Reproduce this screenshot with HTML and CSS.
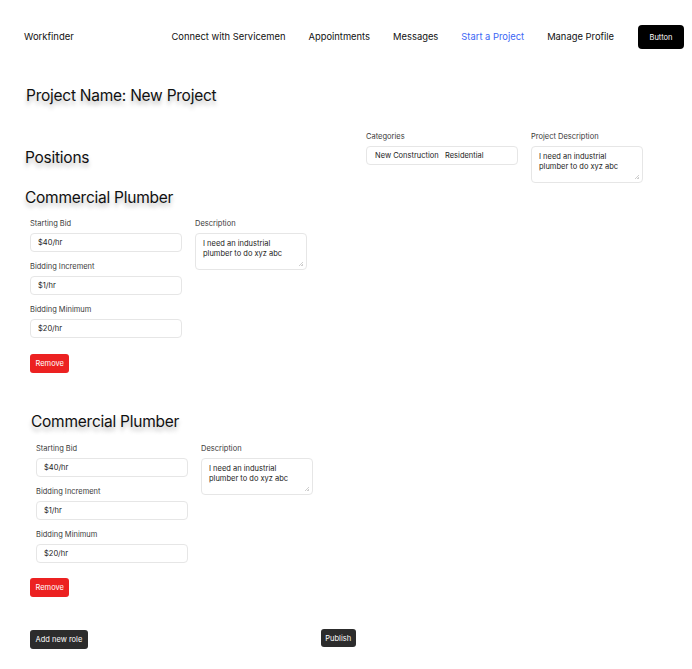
FILE: index.html
```html
<!DOCTYPE html>
<html lang="en">
<head>
<meta charset="utf-8">
<title>Workfinder - Start a Project</title>
<link rel="stylesheet" href="styles.css">
</head>
<body>
<header class="topbar">
  <div class="brand">Workfinder</div>
  <nav class="nav">
    <a class="nav-link" href="#">Connect with Servicemen</a>
    <a class="nav-link" href="#">Appointments</a>
    <a class="nav-link" href="#">Messages</a>
    <a class="nav-link nav-link--active" href="#">Start a Project</a>
    <a class="nav-link" href="#">Manage Profile</a>
  </nav>
  <button class="btn-black">Button</button>
</header>
<main class="page">
  <h1 class="title">Project Name: New Project</h1>
  <section class="overview">
    <h2 class="section-title">Positions</h2>
    <div class="meta">
      <div class="field field--cat">
        <label class="label">Categories</label>
        <div class="input">New Construction&nbsp;&nbsp; Residential</div>
      </div>
      <div class="field field--desc">
        <label class="label">Project Description</label>
        <textarea class="textarea">I need an industrial plumber to do xyz abc</textarea>
      </div>
    </div>
  </section>

  <section class="role">
    <h3 class="role-title">Commercial Plumber</h3>
    <div class="role-grid">
      <div class="role-bids">
        <div class="field field--bid"><label class="label">Starting Bid</label><input class="input" value="$40/hr"></div>
        <div class="field field--bid"><label class="label">Bidding Increment</label><input class="input" value="$1/hr"></div>
        <div class="field field--bid"><label class="label">Bidding Minimum</label><input class="input" value="$20/hr"></div>
      </div>
      <div class="field field--desc"><label class="label">Description</label><textarea class="textarea">I need an industrial plumber to do xyz abc</textarea></div>
    </div>
    <button class="btn-remove">Remove</button>
  </section>

  <section class="role role--second">
    <h3 class="role-title">Commercial Plumber</h3>
    <div class="role-grid">
      <div class="role-bids">
        <div class="field field--bid"><label class="label">Starting Bid</label><input class="input" value="$40/hr"></div>
        <div class="field field--bid"><label class="label">Bidding Increment</label><input class="input" value="$1/hr"></div>
        <div class="field field--bid"><label class="label">Bidding Minimum</label><input class="input" value="$20/hr"></div>
      </div>
      <div class="field field--desc"><label class="label">Description</label><textarea class="textarea">I need an industrial plumber to do xyz abc</textarea></div>
    </div>
    <button class="btn-remove">Remove</button>
  </section>

  <div class="actions">
    <button class="btn-dark">Add new role</button>
    <button class="btn-dark btn-publish">Publish</button>
  </div>
</main>
</body>
</html>
```
FILE: styles.css
```css
* { box-sizing: border-box; }
html, body { margin: 0; padding: 0; background: #fff; }
body {
  font-family: Inter, "Noto Sans", "Liberation Sans", sans-serif;
  color: #000;
  width: 692px;
  height: 669px;
  overflow: hidden;
}

.topbar {
  display: flex;
  align-items: center;
  height: 24px;
  margin-top: 25px;
  padding: 0 8px 0 24px;
}
.brand { font-size: 9.5px; font-weight: 400; color: #111; line-height: 10px; margin-top: -1px; }
.nav {
  display: flex;
  gap: 23px;
  margin-left: auto;
  margin-top: -1px;
}
.nav-link {
  font-size: 9.4px;
  font-weight: 400;
  line-height: 10px;
  color: #111;
  text-decoration: none;
}
.nav-link--active { color: #3b66f5; }
.btn-black {
  margin-left: 24px;
  width: 46px;
  height: 24px;
  border: none;
  border-radius: 4px;
  background: #000;
  color: #fff;
  font-family: inherit;
  font-size: 7.5px;
  padding: 0;
}

.page { padding-left: 25px; }

.title, .section-title, .role-title {
  margin: 0;
  font-size: 15.5px;
  font-weight: 400;
  letter-spacing: -0.25px;
  line-height: 20px;
  color: #111;
  text-shadow: 0 4px 4px rgba(0, 0, 0, 0.25);
}
.title { margin: 37px 0 0 1px; }

.overview {
  display: flex;
  align-items: center;
  margin-top: 26px;
}
.section-title {
  flex: 0 0 341px;
  padding-top: 1px;
}
.meta { display: flex; gap: 13px; }

.field { display: flex; flex-direction: column; }
.field--cat { width: 152px; }
.field--desc { width: 112px; }
.label {
  font-size: 7.5px;
  line-height: 10px;
  color: #3a3a3a;
  margin-bottom: 4px;
}
.input {
  height: 19px;
  width: 152px;
  border: 1px solid #e6e6e6;
  border-radius: 4px;
  padding: 0 7px;
  font-family: inherit;
  font-size: 7.5px;
  color: #222;
  display: flex;
  align-items: center;
  outline: none;
  background: #fff;
}
.field--cat .input { padding-left: 8px; }
.textarea {
  width: 112px;
  height: 37px;
  border: 1px solid #e6e6e6;
  border-radius: 4px;
  padding: 5px 7px;
  font-family: inherit;
  font-size: 7.5px;
  line-height: 10px;
  color: #222;
  resize: none;
  outline: none;
  overflow: hidden;
  background-color: #fff;
  background-image: linear-gradient(135deg, transparent 42%, #cfcfcf 42%, #cfcfcf 56%, transparent 56%, transparent 72%, #cfcfcf 72%);
  background-size: 4px 4px;
  background-position: right 3px bottom 3px;
  background-repeat: no-repeat;
}

.role { margin-top: 5px; }
.role-title { margin-left: 0; }
.role-grid {
  display: flex;
  gap: 13px;
  margin: 11px 0 0 5px;
}
.role-bids { display: flex; flex-direction: column; gap: 10px; }
.btn-remove {
  display: block;
  margin: 16px 0 0 5px;
  height: 19px;
  padding: 0 5.5px;
  border: none;
  border-radius: 3px;
  background: #ec2121;
  color: #fff;
  font-family: inherit;
  font-size: 7.5px;
}
.role--second { margin-top: 39px; }
.role--second .role-title { margin-left: 6px; }
.role--second .role-grid { margin: 12px 0 0 11px; }
.role--second .btn-remove { margin-top: 15px; }

.actions {
  display: flex;
  align-items: flex-start;
  margin: 33px 0 0 5px;
}
.btn-dark {
  height: 19px;
  padding: 0 5.5px;
  border: none;
  border-radius: 3px;
  background: #2c2c2c;
  color: #fff;
  font-family: inherit;
  font-size: 7.5px;
}
.btn-publish {
  height: 18px;
  padding: 0 4.5px;
  margin: -1px 0 0 233px;
}
```
